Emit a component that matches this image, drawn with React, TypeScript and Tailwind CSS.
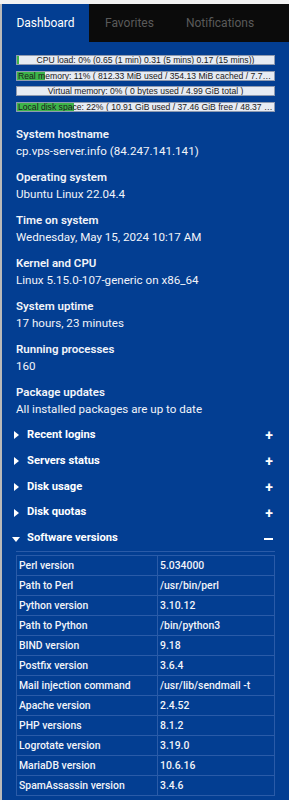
import { useState } from "react";

const bars = [
  { label: "CPU load: 0% (0.65 (1 min) 0.31 (5 mins) 0.17 (15 mins))", pct: 0.6 },
  { label: "Real memory: 11% ( 812.33 MiB used / 354.13 MiB cached / 7.75 GiB total )", pct: 11 },
  { label: "Virtual memory: 0% ( 0 bytes used / 4.99 GiB total )", pct: 0 },
  { label: "Local disk space: 22% ( 10.91 GiB used / 37.46 GiB free / 48.37 GiB total )", pct: 22 },
];

const info = [
  ["System hostname", "cp.vps-server.info (84.247.141.141)"],
  ["Operating system", "Ubuntu Linux 22.04.4"],
  ["Time on system", "Wednesday, May 15, 2024 10:17 AM"],
  ["Kernel and CPU", "Linux 5.15.0-107-generic on x86_64"],
  ["System uptime", "17 hours, 23 minutes"],
  ["Running processes", "160"],
  ["Package updates", "All installed packages are up to date"],
];

const versions = [
  ["Perl version", "5.034000"],
  ["Path to Perl", "/usr/bin/perl"],
  ["Python version", "3.10.12"],
  ["Path to Python", "/bin/python3"],
  ["BIND version", "9.18"],
  ["Postfix version", "3.6.4"],
  ["Mail injection command", "/usr/lib/sendmail -t"],
  ["Apache version", "2.4.52"],
  ["PHP versions", "8.1.2"],
  ["Logrotate version", "3.19.0"],
  ["MariaDB version", "10.6.16"],
  ["SpamAssassin version", "3.4.6"],
];

const Caret = ({ open }: { open: boolean }) => (
  <svg width="8" height="8" viewBox="0 0 8 8" className="shrink-0">
    {open ? <path d="M0 2h8L4 7z" fill="#fff" /> : <path d="M2 0v8l5-4z" fill="#fff" />}
  </svg>
);

const Panel = ({ title, open }: { title: string; open?: boolean }) => (
  <div className="flex items-center h-[25.8px] pl-[10px] pr-[16px]">
    <Caret open={!!open} />
    <span className="ml-[7px] font-bold text-[11.2px] text-white">{title}</span>
    <span className="ml-auto text-white font-bold text-[14px] leading-none">
      {open ? <span className="block w-[9px] h-[2px] bg-white" /> : "+"}
    </span>
  </div>
);

export default function App() {
  const [tab] = useState("Dashboard");

  return (
    <div className="w-[289px] h-[800px] overflow-hidden bg-[#f2f2f2] pt-[4px] font-['Roboto',sans-serif]">
      <div className="h-full border-l-2 border-[#b9b9b9] bg-[#033e92] flex flex-col">
        <div className="flex h-[38px] bg-[#0b0b0b] text-[12px]">
          {["Dashboard", "Favorites", "Notifications"].map((t) => (
            <div
              key={t}
              className={
                t === tab
                  ? "w-[87px] bg-[#033e92] text-white flex items-center justify-center"
                  : "px-[16px] text-[#5a5a5a] flex items-center justify-center"
              }
            >
              {t}
            </div>
          ))}
        </div>

        <div className="px-[14px] pt-[13px] flex flex-col gap-[5.5px]">
          {bars.map((b) => (
            <div
              key={b.label}
              className="relative h-[10px] border border-[#8e9ab0] bg-[#e6ebf3] overflow-hidden"
            >
              <div className="absolute inset-y-0 left-0 bg-[#3db54a]" style={{ width: `${b.pct}%` }} />
              <div className="relative text-[8.6px] leading-[9px] text-[#1a1a1a] text-center whitespace-nowrap overflow-hidden text-ellipsis px-[1px] font-['Liberation_Sans',sans-serif]">
                {b.label}
              </div>
            </div>
          ))}
        </div>

        <div className="px-[14px] pt-[14px] flex flex-col gap-[9px] text-[#f2f4f9]">
          {info.map(([k, v]) => (
            <div key={k} className="leading-[17px]">
              <div className="font-semibold text-[11.5px]">{k}</div>
              <div className="text-[11.6px]">{v}</div>
            </div>
          ))}
        </div>

        <div className="pt-[5px]">
          <Panel title="Recent logins" />
          <Panel title="Servers status" />
          <Panel title="Disk usage" />
          <Panel title="Disk quotas" />
          <Panel title="Software versions" open />
        </div>

        <div className="px-[14px]">
          <div className="border-t border-[#2a5ba8] pt-[3px]">
            <table className="w-full border-collapse text-[10.4px] font-medium text-[#f2f4f9]">
              <tbody>
                {versions.map(([k, v]) => (
                  <tr key={k} className="h-[20px]">
                    <td className="border border-[#2a5ba8] px-[2px] w-[141px]">{k}</td>
                    <td className="border border-[#2a5ba8] px-[2px]">{v}</td>
                  </tr>
                ))}
              </tbody>
            </table>
          </div>
        </div>
      </div>
    </div>
  );
}
